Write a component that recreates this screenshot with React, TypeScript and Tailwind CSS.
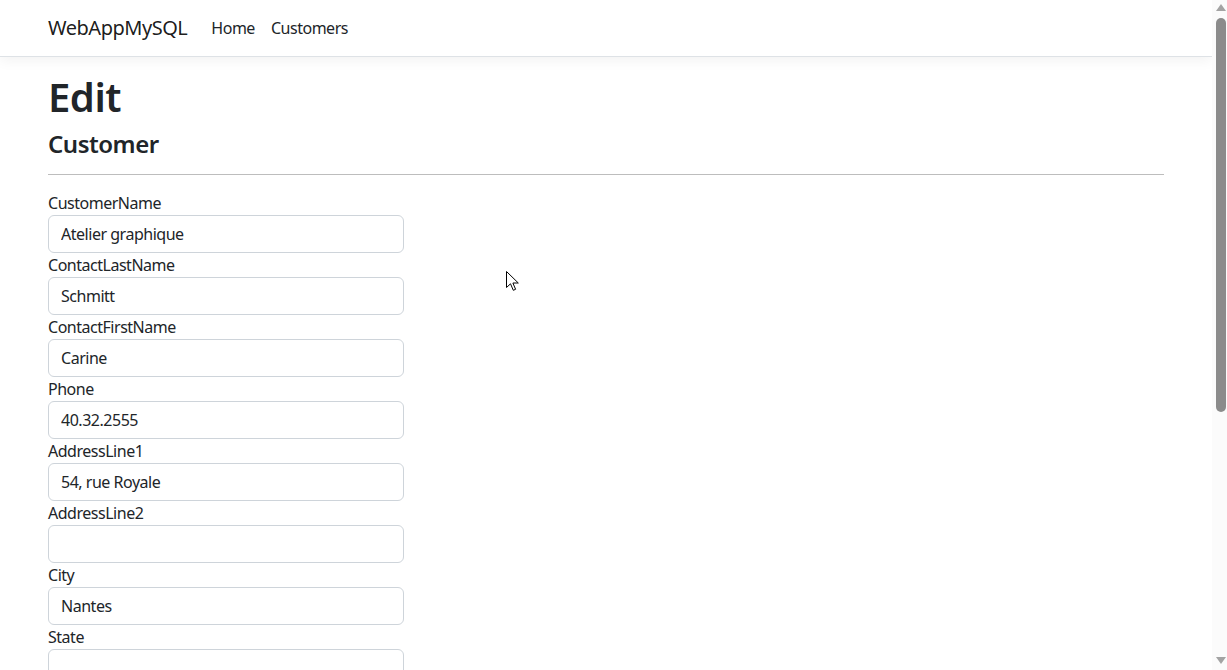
import React from 'react';

const fields: { label: string; value: string }[] = [
    { label: 'CustomerName', value: 'Atelier graphique' },
    { label: 'ContactLastName', value: 'Schmitt' },
    { label: 'ContactFirstName', value: 'Carine' },
    { label: 'Phone', value: '40.32.2555' },
    { label: 'AddressLine1', value: '54, rue Royale' },
    { label: 'AddressLine2', value: '' },
    { label: 'City', value: 'Nantes' },
    { label: 'State', value: '' },
];

function Scrollbar() {
    return (
        <div className="w-[15px] shrink-0 bg-[#fbfbfb] flex flex-col items-center">
            <svg width="10" height="7" viewBox="0 0 10 7" className="mt-[4px] ml-[2px]">
                <polygon points="5,0 10,7 0,7" fill="#a3a3a3" />
            </svg>
            <div className="mt-[7px] ml-[2px] w-[10px] h-[394px] rounded-full bg-[#8b8b8b]" />
            <div className="flex-1" />
            <svg width="10" height="7" viewBox="0 0 10 7" className="mb-[6px] ml-[2px]">
                <polygon points="0,0 10,0 5,7" fill="#a3a3a3" />
            </svg>
        </div>
    );
}

export default function App() {
    return (
        <div
            className="relative h-[670px] flex overflow-hidden bg-white text-[#212529] tracking-[-0.03em]"
            style={{ fontFamily: '"Segoe UI", "Noto Sans", sans-serif' }}
        >
            <div className="flex-1 min-w-0 overflow-hidden">
                {/* Navbar */}
                <header className="h-[57px] bg-white border-b border-[#dee2e6] shadow-[0_4px_12px_rgba(0,0,0,0.05)]">
                    <nav className="max-w-[1140px] mx-auto px-[12px] h-[56px] flex items-center">
                        <a className="text-[20px] text-black/90 mr-[16px]">WebAppMySQL</a>
                        <a className="text-[16px] text-[#212529] px-[8px]">Home</a>
                        <a className="text-[16px] text-[#212529] px-[8px]">Customers</a>
                    </nav>
                </header>

                {/* Main */}
                <main className="max-w-[1140px] mx-auto px-[12px] pt-[16px]">
                    <h1 className="text-[40px] leading-[48px] font-semibold mb-[8px]">Edit</h1>
                    <h4 className="text-[24px] leading-[29px] font-semibold">Customer</h4>
                    <hr className="mt-[16px] mb-[16px] border-t border-[#bdbdbd]" />
                    <div className="w-[356px]">
                        <form>
                            {fields.map((f) => (
                                <div key={f.label}>
                                    <label className="block text-[16px] leading-[24px]">{f.label}</label>
                                    <input
                                        type="text"
                                        defaultValue={f.value}
                                        className="block w-full h-[38px] px-[12px] border border-[#ced4da] rounded-[6px] text-[16px] text-[#212529] bg-white outline-none tracking-[-0.03em]"
                                    />
                                </div>
                            ))}
                        </form>
                    </div>
                </main>
            </div>

            <Scrollbar />

            {/* mouse cursor */}
            <svg
                width="14"
                height="22"
                viewBox="0 0 14 22"
                className="absolute left-[506px] top-[271px] pointer-events-none"
            >
                <path
                    d="M0.5 0.5 L0.5 16.5 L4.5 12.8 L7.3 19.3 L9.6 18.3 L6.9 12 L12.3 12 Z"
                    fill="white"
                    stroke="black"
                    strokeWidth="1"
                    strokeLinejoin="round"
                />
            </svg>
        </div>
    );
}
